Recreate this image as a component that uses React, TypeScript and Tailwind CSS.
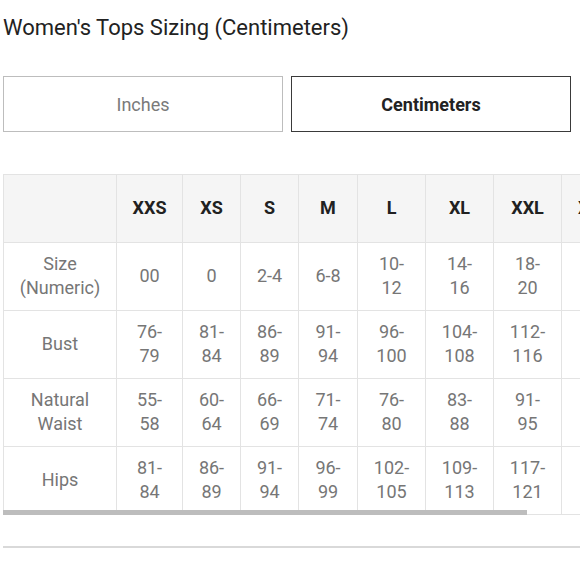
// Women's tops size chart (centimeters view)

const font = { fontFamily: 'Roboto, "Noto Sans", Arial, sans-serif' };

// column widths incl. right border, written out so Tailwind picks them up
const COLS = [
  'w-[113px]',
  'w-[66px]',
  'w-[58px]',
  'w-[58px]',
  'w-[59px]',
  'w-[68px]',
  'w-[68px]',
  'w-[68px]',
  'w-[77px]',
];

const SIZES = ['XXS', 'XS', 'S', 'M', 'L', 'XL', 'XXL', 'XXXL'];

const ROWS: { label: string[]; values: string[] }[] = [
  {
    label: ['Size', '(Numeric)'],
    values: ['00', '0', '2-4', '6-8', '10-12', '14-16', '18-20', '22-24'],
  },
  {
    label: ['Bust'],
    values: ['76-79', '81-84', '86-89', '91-94', '96-100', '104-108', '112-116', '120-124'],
  },
  {
    label: ['Natural', 'Waist'],
    values: ['55-58', '60-64', '66-69', '71-74', '76-80', '83-88', '91-95', '99-103'],
  },
  {
    label: ['Hips'],
    values: ['81-84', '86-89', '91-94', '96-99', '102-105', '109-113', '117-121', '125-129'],
  },
];

// ranges longer than "6-8" wrap after the hyphen
function splitRange(v: string): string[] {
  if (v.length <= 3) return [v];
  const i = v.indexOf('-');
  return [v.slice(0, i + 1), v.slice(i + 1)];
}

function Cell({ col, lines, head }: { col: number; lines: string[]; head?: boolean }) {
  return (
    <div
      className={`${COLS[col]} shrink-0 h-full pb-[2px] flex flex-col items-center justify-center text-center border-r border-[#e3e3e3] ${
        head ? 'font-bold text-[#212121]' : 'text-[#767676]'
      }`}
    >
      {lines.map((l, i) => (
        <span key={i} className="block whitespace-nowrap">
          {l}
        </span>
      ))}
    </div>
  );
}

export default function App() {
  return (
    <div className="min-h-screen w-[580px] bg-white pl-[3px] overflow-hidden" style={font}>
      {/* Title */}
      <h1 className="pt-[14px] text-[22px] leading-[28px] text-[#222222]">
        Women's Tops Sizing (Centimeters)
      </h1>

      {/* Unit toggle */}
      <div className="mt-[34px] flex gap-2 w-[568px]">
        <button className="w-[280px] h-[56px] border border-[#bdbdbd] text-[18px] text-[#7a7a7a]">
          Inches
        </button>
        <button className="w-[280px] h-[56px] border border-[#3a3a3a] text-[18px] font-bold text-[#222222]">
          Centimeters
        </button>
      </div>

      <div className="relative mt-[42px] w-[577px] overflow-hidden">
        <div className="w-max border-l border-t border-[#e3e3e3] text-[18px] leading-[24px]">
          <div className="flex h-[68px] bg-[#f5f5f5] border-b border-[#e3e3e3]">
            <Cell col={0} lines={['']} head />
            {SIZES.map((s, i) => (
              <Cell key={s} col={i + 1} lines={[s]} head />
            ))}
          </div>
          {ROWS.map(row => (
            <div key={row.label.join(' ')} className="flex h-[68px] border-b border-[#e3e3e3]">
              <Cell col={0} lines={row.label} />
              {row.values.map((v, i) => (
                <Cell key={i} col={i + 1} lines={splitRange(v)} />
              ))}
            </div>
          ))}
        </div>
        {/* scrollbar thumb */}
        <div className="absolute left-0 top-[336px] h-[5px] w-[524px] bg-[#bdbdbd]" />
      </div>

      <div className="mt-[31px] h-[2px] w-[577px] bg-[#d9d9d9]" />
    </div>
  );
}
